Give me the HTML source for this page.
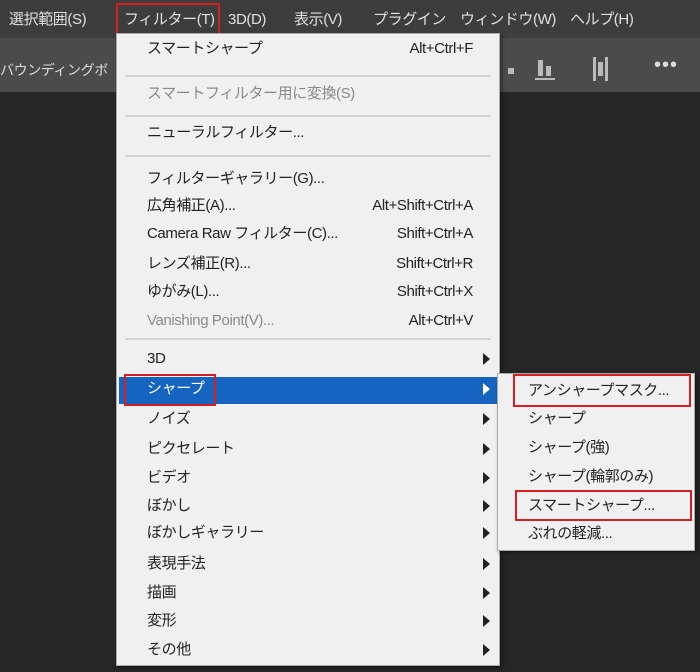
<!DOCTYPE html>
<html><head><meta charset="utf-8"><style>
*{margin:0;padding:0;box-sizing:border-box}
body{width:700px;height:672px;background:#262626;position:relative;overflow:hidden;font-family:"Liberation Sans","Noto Sans CJK JP",sans-serif;letter-spacing:-0.4px}
.bar{position:absolute;left:0;top:0;width:700px;height:38px;background:#3d3d3d}
.tool{position:absolute;left:0;top:38px;width:700px;height:54px;background:#4b4b4b}
.t{position:absolute;white-space:nowrap;font-size:15px;line-height:22px}
.mb{color:#e0e0e0;top:9px}
.menu{position:absolute;left:116px;top:33px;width:384px;height:633px;background:#f0f0f0;border:1px solid #aaa;box-shadow:2px 2px 4px rgba(0,0,0,.4)}
.sub{position:absolute;left:497px;top:373px;width:198px;height:178px;background:#f0f0f0;border:1px solid #aaa;box-shadow:2px 2px 4px rgba(0,0,0,.4)}
.i,.k,.si{line-height:22px}
.i{position:absolute;left:30px;font-size:15px;color:#222;white-space:nowrap}
.g{color:#8a8a8a}
.k{position:absolute;right:26px;font-size:15px;color:#222;white-space:nowrap}
.sep{position:absolute;left:8px;right:8px;height:2px;background:#d4d4d4}
.ar{position:absolute;left:366px;width:0;height:0;border-top:6px solid transparent;border-bottom:6px solid transparent;border-left:7px solid #222}
.hl{position:absolute;left:2px;right:2px;top:343px;height:27px;background:#1565c0}
.red{position:absolute;border:2px solid #d42020}
.si{position:absolute;left:30px;font-size:15px;color:#222;white-space:nowrap}
</style></head><body>
<div class="bar"></div>
<div class="tool"></div>
<div class="t mb" style="left:9px">選択範囲(S)</div>
<div class="t mb" style="left:124px">フィルター(T)</div>
<div class="t mb" style="left:228px">3D(D)</div>
<div class="t mb" style="left:294px">表示(V)</div>
<div class="t mb" style="left:373px">プラグイン</div>
<div class="t mb" style="left:460px">ウィンドウ(W)</div>
<div class="t mb" style="left:570px">ヘルプ(H)</div>
<div class="red" style="left:116px;top:3px;width:104px;height:32px"></div>
<div class="t" style="left:0;top:59px;color:#ddd;font-size:14px">バウンディングボ</div>
<div style="position:absolute;left:508px;top:68px;width:6px;height:6px;background:#bbb"></div>
<div style="position:absolute;left:538px;top:60px;width:5px;height:16px;background:#bbb"></div>
<div style="position:absolute;left:546px;top:66px;width:5px;height:10px;background:#bbb"></div>
<div style="position:absolute;left:535px;top:78px;width:20px;height:2px;background:#bbb"></div>
<div style="position:absolute;left:593px;top:57px;width:3px;height:24px;background:#bbb"></div>
<div style="position:absolute;left:598px;top:62px;width:5px;height:14px;background:#bbb"></div>
<div style="position:absolute;left:605px;top:57px;width:3px;height:24px;background:#bbb"></div>
<div class="t" style="left:654px;top:54px;color:#ddd;font-size:20px;letter-spacing:1px">•••</div>
<div class="menu">
<div class="i" style="top:4px">スマートシャープ</div><div class="k" style="top:4px">Alt+Ctrl+F</div>
<div class="sep" style="top:41px"></div>
<div class="i g" style="top:49px">スマートフィルター用に変換(S)</div>
<div class="sep" style="top:81px"></div>
<div class="i" style="top:88px">ニューラルフィルター...</div>
<div class="sep" style="top:121px"></div>
<div class="i" style="top:134px">フィルターギャラリー(G)...</div>
<div class="i" style="top:161px">広角補正(A)...</div><div class="k" style="top:161px">Alt+Shift+Ctrl+A</div>
<div class="i" style="top:189px">Camera Raw フィルター(C)...</div><div class="k" style="top:189px">Shift+Ctrl+A</div>
<div class="i" style="top:219px">レンズ補正(R)...</div><div class="k" style="top:219px">Shift+Ctrl+R</div>
<div class="i" style="top:247px">ゆがみ(L)...</div><div class="k" style="top:247px">Shift+Ctrl+X</div>
<div class="i g" style="top:276px">Vanishing Point(V)...</div><div class="k g" style="top:276px">Alt+Ctrl+V</div>
<div class="sep" style="top:304px"></div>
<div class="hl"></div>
<div class="i" style="top:314px">3D</div><div class="ar" style="top:319px"></div>
<div class="i" style="top:344px;color:#fff">シャープ</div><div class="ar" style="top:349px;border-left-color:#fff"></div>
<div class="i" style="top:374px">ノイズ</div><div class="ar" style="top:379px"></div>
<div class="i" style="top:404px">ピクセレート</div><div class="ar" style="top:409px"></div>
<div class="i" style="top:433px">ビデオ</div><div class="ar" style="top:438px"></div>
<div class="i" style="top:461px">ぼかし</div><div class="ar" style="top:466px"></div>
<div class="i" style="top:488px">ぼかしギャラリー</div><div class="ar" style="top:493px"></div>
<div class="i" style="top:519px">表現手法</div><div class="ar" style="top:524px"></div>
<div class="i" style="top:548px">描画</div><div class="ar" style="top:553px"></div>
<div class="i" style="top:576px">変形</div><div class="ar" style="top:581px"></div>
<div class="i" style="top:605px">その他</div><div class="ar" style="top:610px"></div>
</div>
<div class="red" style="left:124px;top:374px;width:92px;height:32px"></div>
<div class="sub">
<div class="si" style="top:6px">アンシャープマスク...</div>
<div class="si" style="top:34px">シャープ</div>
<div class="si" style="top:63px">シャープ(強)</div>
<div class="si" style="top:92px">シャープ(輪郭のみ)</div>
<div class="si" style="top:121px">スマートシャープ...</div>
<div class="si" style="top:149px">ぶれの軽減...</div>
</div>
<div class="red" style="left:513px;top:374px;width:178px;height:33px"></div>
<div class="red" style="left:515px;top:490px;width:177px;height:31px"></div>
</body></html>
